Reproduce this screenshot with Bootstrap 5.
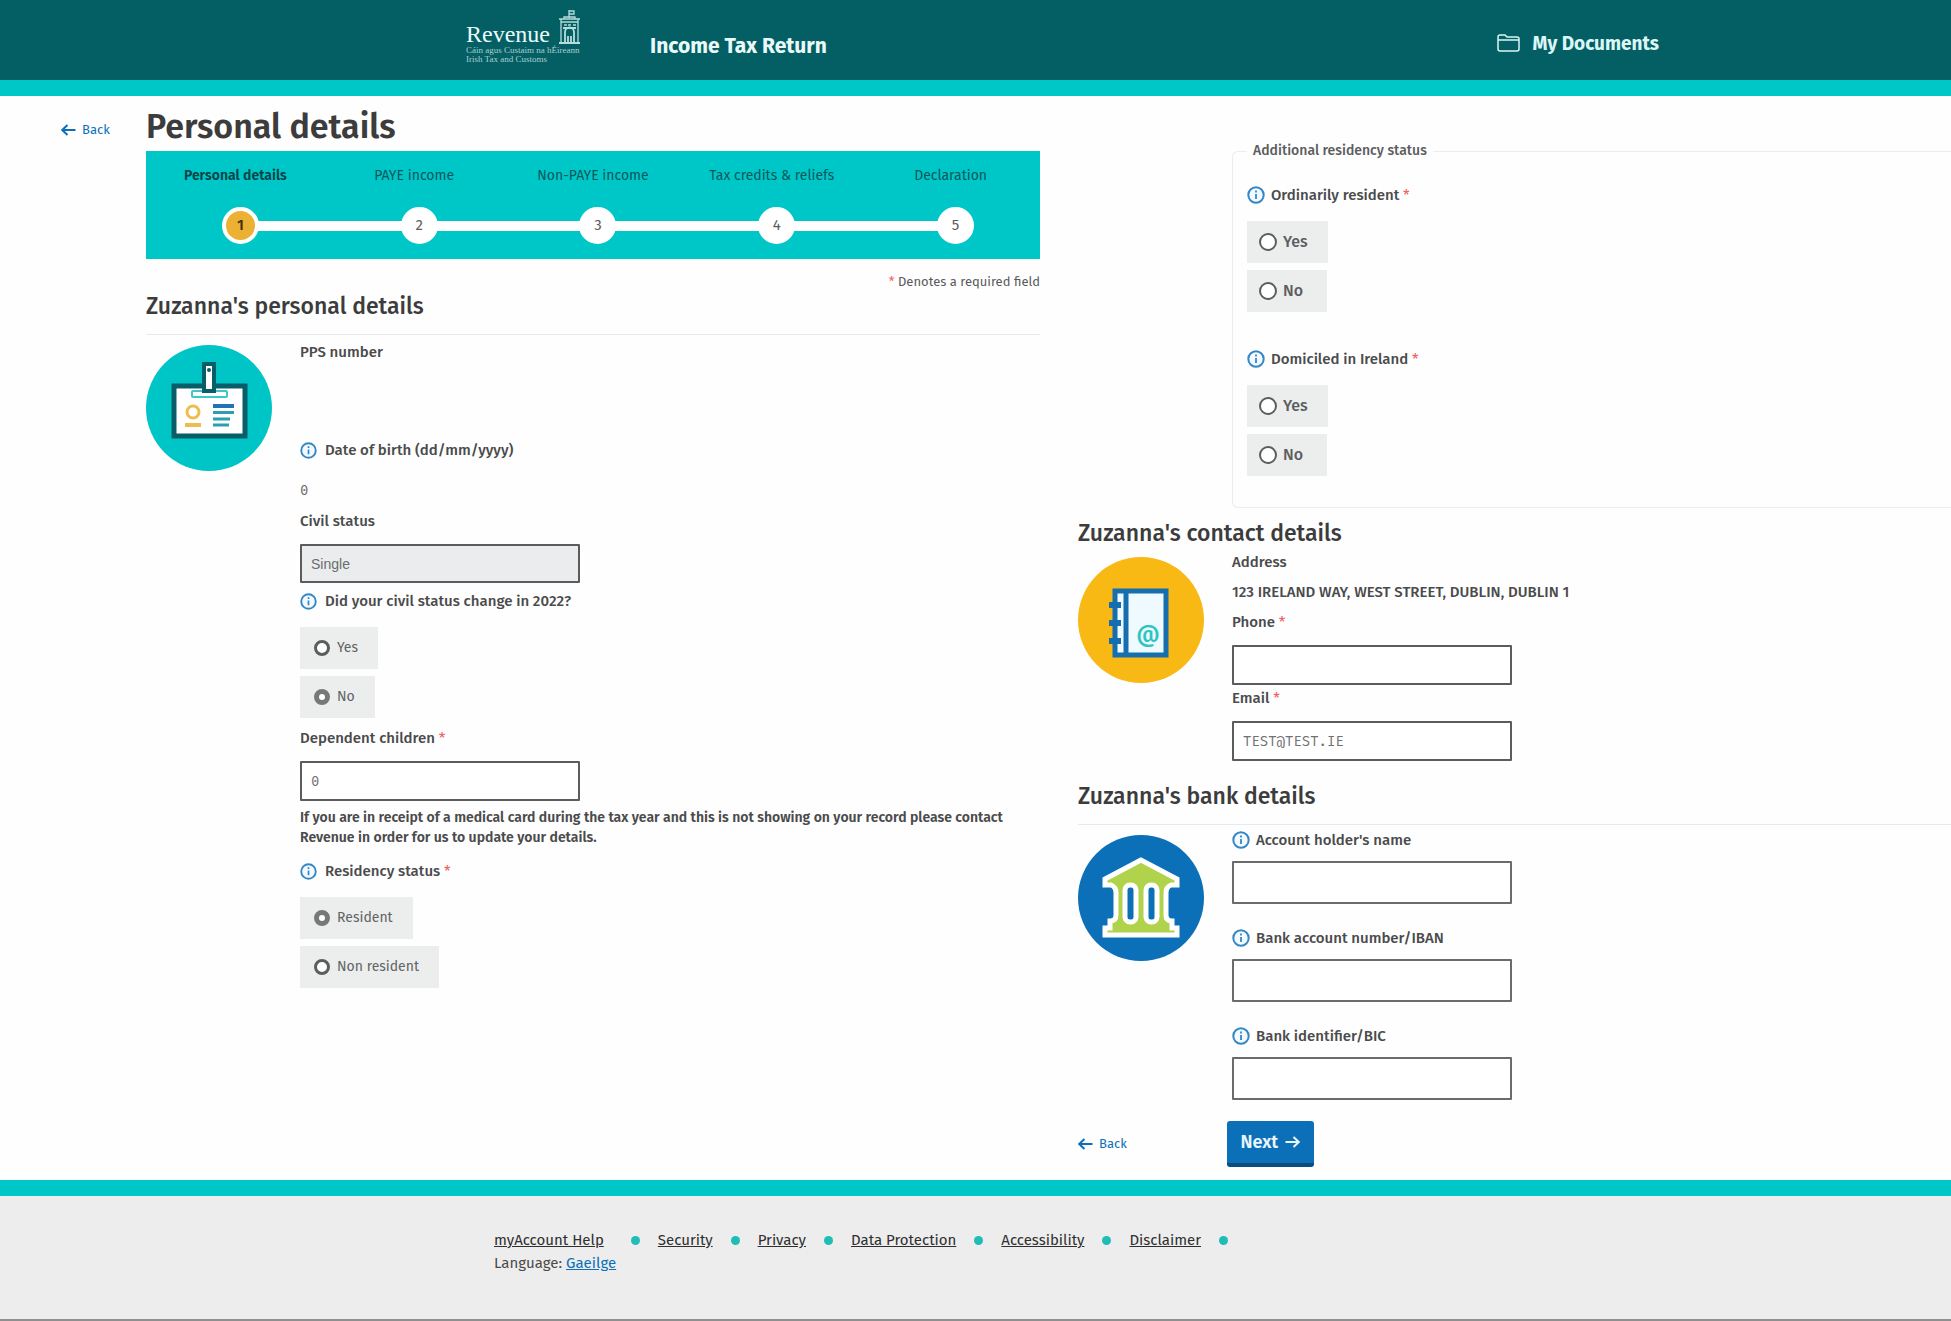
<!DOCTYPE html>
<html lang="en">
<head>
<meta charset="utf-8">
<meta name="viewport" content="width=device-width, initial-scale=1">
<title>Income Tax Return - Personal details</title>
<link href="https://cdn.jsdelivr.net/npm/bootstrap@5.3.0/dist/css/bootstrap.min.css" rel="stylesheet">
<style>
  :root { --teal: #00c7c7; --deep: #035f63; --ink: #4a4b4c; --blue: #0b70b8; }
  body { font-family: "Fira Sans", Roboto, "Noto Sans", sans-serif; font-size: 15px; line-height: 20px; color: var(--ink); background: #fefefe; }
  a { color: var(--blue); }
  .site-head { background: var(--deep); border-bottom: 16px solid var(--teal); height: 96px; padding: 0 292px 0 466px; color: #eafafa; }
  .site-head a { color: #dcf6f6; }
  .brand { width: 184px; font-family: "Liberation Serif", serif; }
  .brand-name { font-size: 24px; line-height: 24px; }
  .brand-sub { font-size: 9px; line-height: 9px; color: #a6d0d0; white-space: nowrap; }
  .app-title { font-size: 21px; line-height: 24px; padding-top: 12px; }
  .docs-link { font-size: 19px; line-height: 24px; gap: 12px; font-weight: 700; }
  .page-grid { display: grid; grid-template-columns: 85px minmax(0, 894fr) minmax(0, 911fr); padding-left: 61px; }
  .right-col { margin-left: 38px; }
  .back-link { font-size: 13px; gap: 6px; }
  .page-title { font-size: 34px; line-height: 40px; font-weight: 600; margin: 11px 0 4px; color: #3c3c3d; }
  .section-title { font-size: 23px; line-height: 28px; font-weight: 500; margin: 0; color: #3c3c3d; }
  .ruled { padding-bottom: 14px; border-bottom: 1px solid #e9eaea; }
  .stepper { background: var(--teal); height: 108px; padding: 15px 0 0; list-style: none; margin: 0; }
  .stepper li { flex: 1 1 0; text-align: center; font-size: 14px; color: #08585c; }
  .stepper li.current { font-weight: 600; color: #064348; }
  .track { margin-top: 21px; padding-left: 10px; position: relative; display: flex; justify-content: center; }
  .stepper li:not(:last-child) .track::after { content: ""; position: absolute; left: 50%; top: 14px; width: 100%; height: 10px; background: #fff; }
  .bubble { width: 37px; height: 37px; border-radius: 50%; background: #fff; border: 4px solid #fff; line-height: 28px; font-size: 15px; color: #5d5d5d; position: relative; z-index: 1; }
  .current .bubble { background: #ecb033; color: #3d3413; }
  .req { color: #ee6464; font-weight: 400; }
  .note { font-size: 13px; margin-top: 13px; color: #5a5a5b; }
  .pict { width: 126px; height: 126px; flex: none; margin-top: 10px; }
  .fields { margin-left: 28px; flex: 1 1 0; padding-top: 7px; }
  .right-col .fields { padding-top: 5px; }
  .lbl { display: flex; align-items: center; font-weight: 500; white-space: pre; min-height: 20px; font-size: 15px; line-height: 20px; margin: 0; }
  .lbl svg { margin-right: 8px; flex: none; }
  .right-col .lbl svg { margin-right: 6px; }
  .gap-s { margin-top: 3px; }
  .gap-m { margin-top: 10px; }
  .gap-l { margin-top: 21px; }
  .gap-xl { margin-top: 37px; }
  .gap-birth { margin-top: 78px; }
  .box { display: block; width: 280px; height: 40px; border: 2px solid #5b5c5d; border-radius: 1px; padding: 0 9px; margin-top: 13px; background: #fff; color: #707172; font-family: "Fira Mono", "DejaVu Sans Mono", monospace; font-size: 14px; line-height: 20px; }
  .box.thin { height: 43px; margin-top: 11px; border-color: #6a6b6c; }
  select.box { height: 39px; appearance: none; background: #eaeced; opacity: 1; color: #6c6d6e; font-family: "Liberation Sans", sans-serif; font-size: 14px; }
  .mono { font-family: "Fira Mono", "DejaVu Sans Mono", monospace; font-size: 14px; color: #6b6b6b; }
  .picks { display: flex; flex-direction: column; align-items: flex-start; gap: 7px; margin-top: 16px; }
  .pick { display: flex; align-items: center; height: 42px; padding: 0 20px 0 14px; background: #eceeee; font-size: 14px; color: #626364; }
  .pick input { appearance: none; width: 16px; height: 16px; margin: 0 7px 0 0; border: 3px solid #5c5d5e; border-radius: 50%; background: #fff; }
  .pick input:checked { border-width: 5px; border-color: #77787a; }
  .right-col .pick { min-width: 80px; font-size: 16px; font-weight: 500; color: #5c5d5e; padding-left: 12px; }
  .right-col .pick input { width: 18px; height: 18px; border-width: 2px; margin-right: 6px; }
  .notice { font-size: 14px; font-weight: 600; margin: 7px 0 13px; }
  .residency { margin: 45px 0 11px 154px; border: 1px solid #ececec; border-right: 0; border-radius: 6px 0 0 6px; padding: 24px 0 31px 14px; }
  .residency legend { float: none; width: auto; font-size: 14px; line-height: 20px; font-weight: 500; padding: 0 6px; margin: 0; color: #5c5d5e; }
  .actions { margin: 21px 0 13px; }
  .next-btn { width: 87px; height: 46px; border: 0; border-bottom: 4px solid #0a4d80; border-radius: 3px; background: var(--blue); color: #e9f5ff; font-size: 18px; font-weight: 600; gap: 7px; margin-left: 100px; }
  .flip { transform: rotate(180deg); }
  .site-foot { background: #ededed; border-top: 16px solid var(--teal); border-bottom: 2px solid #8f8f8f; padding: 34px 0 0 494px; flex: 1 0 auto; min-height: 140px; }
  .foot-links { gap: 18px; list-style: none; padding: 0; margin: 0 0 3px; }
  .foot-links li { display: flex; align-items: center; gap: 18px; }
  .foot-links a { color: #2f2f2f; }
  .foot-links li::after { content: ""; width: 9px; height: 9px; border-radius: 50%; background: #1fbcb8; }
  .foot-links li:first-child { gap: 27px; }
</style>
</head>
<body class="d-flex flex-column min-vh-100">
<svg width="0" height="0" class="d-none" aria-hidden="true">
  <symbol id="info" viewBox="0 0 18 18"><circle cx="9" cy="9" r="7.7" fill="#f2faff" stroke="#3587c4" stroke-width="2"/><path d="M9 8v5M9 4.6v1.8" stroke="#3587c4" stroke-width="1.8"/></symbol>
  <symbol id="arrow" viewBox="0 0 15 12"><path d="M1 6h13.5M6.500 1 1.200 6l5.300 5" fill="none" stroke="currentColor" stroke-width="2"/></symbol>
</svg>

<header class="site-head d-flex align-items-start">
  <div class="brand">
    <div class="d-flex align-items-end">
      <span class="brand-name">Revenue</span>
      <svg class="ms-2" width="23" height="46" viewBox="0 0 23 46" fill="none" stroke="#b7dcdc" aria-hidden="true">
        <path d="M11 10v8M11 11h5v3h-5M1 19h21M3 22h17M3 19v24M20 19v24M6 25h3M10 25h3M15 25h3M6 19v-2h11v2" stroke-width="1.3"/>
        <path d="M7 43V32a4.500 4.500 0 0 1 9 0v11M10 43v-7M13 43v-7M1 43h21M5 28h13" stroke-width="1.8"/>
      </svg>
    </div>
    <div class="brand-sub">Cáin agus Custaim na hÉireann<br>Irish Tax and Customs</div>
  </div>
  <div class="app-title fw-bold align-self-center">Income Tax Return</div>
  <a href="#" class="docs-link d-flex align-items-center align-self-center text-decoration-none ms-auto pt-2">
    <svg width="23" height="20" viewBox="0 0 23 20" fill="none" stroke="currentColor" stroke-width="1.500" aria-hidden="true"><path d="M1 15V3a2 2 0 0 1 2-2h5l2 2h10a2 2 0 0 1 2 2v10a2 2 0 0 1-2 2H3a2 2 0 0 1-2-2zM1 6h21"/></svg>
    My Documents
  </a>
</header>

<main class="page-grid">
  <div class="pt-4"><a href="#" class="back-link d-flex align-items-center text-decoration-none"><svg width="15" height="12" aria-hidden="true"><use href="#arrow"/></svg>Back</a></div>

  <section>
    <h1 class="page-title">Personal details</h1>
    <ol class="stepper d-flex">
      <li class="current">Personal details<div class="track"><span class="bubble">1</span></div></li>
      <li>PAYE income<div class="track"><span class="bubble">2</span></div></li>
      <li>Non-PAYE income<div class="track"><span class="bubble">3</span></div></li>
      <li>Tax credits &amp; reliefs<div class="track"><span class="bubble">4</span></div></li>
      <li>Declaration<div class="track"><span class="bubble">5</span></div></li>
    </ol>
    <div class="note text-end"><span class="req">*</span> Denotes a required field</div>
    <h2 class="section-title ruled">Zuzanna's personal details</h2>
    <div class="d-flex align-items-start">
      <svg class="pict" viewBox="0 0 126 126" aria-hidden="true">
        <circle cx="63" cy="63" r="63" fill="#00c5c6"/>
        <rect x="28" y="41" width="71" height="50" fill="#fff" stroke="#075e68" stroke-width="5"/>
        <rect x="46" y="46" width="35" height="6" rx="1" fill="#fff" stroke="#3cc9c5" stroke-width="2"/>
        <rect x="58" y="19" width="10" height="27" fill="#fff" stroke="#075e68" stroke-width="4"/>
        <circle cx="63" cy="25" r="2" fill="#075e68"/>
        <circle cx="47" cy="67" r="6" fill="none" stroke="#efbd4f" stroke-width="3"/>
        <path d="M39 80h16" stroke="#efbd4f" stroke-width="4"/>
        <path d="M67 61h21" stroke="#2273b4" stroke-width="4"/>
        <path d="M67 67.500h21M67 74h17M67 80h16" stroke="#2a9fae" stroke-width="3"/>
      </svg>
      <div class="fields">
        <div class="lbl">PPS number</div>
        <div class="lbl gap-birth"><svg width="17" height="17"><use href="#info"/></svg>Date of birth (dd/mm/yyyy)</div>
        <div class="mono gap-l">0</div>
        <label class="lbl gap-m" for="civil">Civil status</label>
        <select class="box" id="civil" disabled><option>Single</option></select>
        <div class="lbl mt-2" id="changed"><svg width="17" height="17"><use href="#info"/></svg>Did your civil status change in 2022?</div>
        <div class="picks" role="radiogroup" aria-labelledby="changed">
          <label class="pick"><input type="radio" name="changed">Yes</label>
          <label class="pick"><input type="radio" name="changed" checked>No</label>
        </div>
        <label class="lbl gap-m" for="kids">Dependent children <span class="req">*</span></label>
        <input class="box" id="kids" type="text" value="0">
        <p class="notice">If you are in receipt of a medical card during the tax year and this is not showing on your record please contact Revenue in order for us to update your details.</p>
        <div class="lbl" id="resid"><svg width="17" height="17"><use href="#info"/></svg>Residency status <span class="req">*</span></div>
        <div class="picks" role="radiogroup" aria-labelledby="resid">
          <label class="pick"><input type="radio" name="resid" checked>Resident</label>
          <label class="pick"><input type="radio" name="resid">Non resident</label>
        </div>
      </div>
    </div>
  </section>

  <section class="right-col">
    <fieldset class="residency">
      <legend>Additional residency status</legend>
      <div class="lbl" id="ordin"><svg width="18" height="18"><use href="#info"/></svg>Ordinarily resident <span class="req">*</span></div>
      <div class="picks" role="radiogroup" aria-labelledby="ordin">
        <label class="pick"><input type="radio" name="ordin">Yes</label>
        <label class="pick"><input type="radio" name="ordin">No</label>
      </div>
      <div class="lbl gap-xl" id="domi"><svg width="18" height="18"><use href="#info"/></svg>Domiciled in Ireland <span class="req">*</span></div>
      <div class="picks" role="radiogroup" aria-labelledby="domi">
        <label class="pick"><input type="radio" name="domi">Yes</label>
        <label class="pick"><input type="radio" name="domi">No</label>
      </div>
    </fieldset>

    <h2 class="section-title">Zuzanna's contact details</h2>
    <div class="d-flex align-items-start">
      <svg class="pict" viewBox="0 0 126 126" aria-hidden="true">
        <circle cx="63" cy="63" r="63" fill="#f8b915"/>
        <rect x="37" y="34" width="51" height="64" fill="#eefaff" stroke="#156fae" stroke-width="5"/>
        <path d="M48 34v64" stroke="#156fae" stroke-width="5"/>
        <path d="M31 48h12M31 66h12M31 84h12" stroke="#156fae" stroke-width="6"/>
        <text x="70" y="85" text-anchor="middle" font-family="Fira Sans, Roboto, sans-serif" font-weight="500" font-size="23" fill="#2cc5c0">@</text>
      </svg>
      <div class="fields">
        <div class="lbl">Address</div>
        <div class="lbl gap-m">123 IRELAND WAY, WEST STREET, DUBLIN, DUBLIN 1</div>
        <label class="lbl gap-m" for="phone">Phone <span class="req">*</span></label>
        <input class="box" id="phone" type="tel">
        <label class="lbl gap-s" for="email">Email <span class="req">*</span></label>
        <input class="box" id="email" type="email" value="TEST@TEST.IE">
      </div>
    </div>

    <h2 class="section-title ruled gap-l">Zuzanna's bank details</h2>
    <div class="d-flex align-items-start">
      <svg class="pict" viewBox="0 0 126 126" aria-hidden="true">
        <circle cx="63" cy="63" r="63" fill="#0c70b9"/>
        <path d="M63 25 27 44v6h6q5 2 5 8v22q0 6-6 6v7h-5v7h72v-7h-5v-7q-6 0-6-6V58q0-6 5-8h6v-6z" fill="#b1d34b" stroke="#fff" stroke-width="5"/>
        <rect x="47" y="50" width="11" height="37" rx="5" fill="#0c70b9" stroke="#fff" stroke-width="5"/>
        <rect x="68" y="50" width="11" height="37" rx="5" fill="#0c70b9" stroke="#fff" stroke-width="5"/>
      </svg>
      <div class="fields">
        <label class="lbl" for="holder"><svg width="18" height="18"><use href="#info"/></svg>Account holder's name</label>
        <input class="box thin" id="holder" type="text">
        <label class="lbl mt-4" for="iban"><svg width="18" height="18"><use href="#info"/></svg>Bank account number/IBAN</label>
        <input class="box thin" id="iban" type="text">
        <label class="lbl mt-4" for="bic"><svg width="18" height="18"><use href="#info"/></svg>Bank identifier/BIC</label>
        <input class="box thin" id="bic" type="text">
      </div>
    </div>
    <div class="d-flex align-items-center actions">
      <a href="#" class="back-link d-flex align-items-center text-decoration-none"><svg width="15" height="12" aria-hidden="true"><use href="#arrow"/></svg>Back</a>
      <button type="button" class="next-btn d-flex align-items-center justify-content-center">Next <svg class="flip" width="15" height="12" aria-hidden="true"><use href="#arrow"/></svg></button>
    </div>
  </section>
</main>

<footer class="site-foot">
  <ul class="foot-links d-flex flex-wrap">
    <li><a href="#">myAccount Help</a></li>
    <li><a href="#">Security</a></li>
    <li><a href="#">Privacy</a></li>
    <li><a href="#">Data Protection</a></li>
    <li><a href="#">Accessibility</a></li>
    <li><a href="#">Disclaimer</a></li>
  </ul>
  <div>Language: <a href="#">Gaeilge</a></div>
</footer>
<script src="https://cdn.jsdelivr.net/npm/bootstrap@5.3.0/dist/js/bootstrap.bundle.min.js"></script>
</body>
</html>
